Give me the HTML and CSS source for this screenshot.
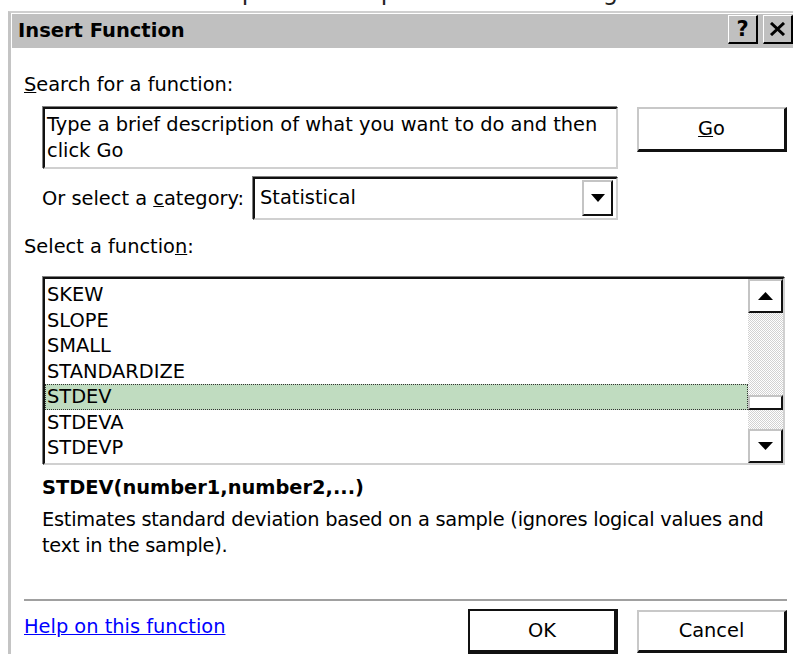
FILE: index.html
```html
<!DOCTYPE html>
<html lang="en">
<head>
<meta charset="utf-8">
<title>Insert Function</title>
<link rel="stylesheet" href="styles.css">
</head>
<body>
  <div class="doc-line"><p>Click the arrow to open the drop-down list of categories and then select the appropriate one.</p></div>

  <div class="window">
    <div class="frame">
      <div class="titlebar">
        <span class="title">Insert Function</span>
        <div class="caption-buttons">
          <span class="cap-btn">?</span>
          <span class="cap-btn">
            <svg width="17" height="14" viewBox="0 0 17 14" aria-hidden="true">
              <path d="M2 1 L15 13 M15 1 L2 13" stroke="#000" stroke-width="3" fill="none"/>
            </svg>
          </span>
        </div>
      </div>

      <div class="content">
        <div class="label"><u>S</u>earch for a function:</div>

        <div class="search-row">
          <div class="field search-box">Type a brief description of what you want to do and then click Go</div>
          <div class="button"><span><u>G</u>o</span></div>
        </div>

        <div class="category-row">
          <span class="cat-label">Or select a <u>c</u>ategory:</span>
          <div class="field combo">
            <span class="combo-value">Statistical</span>
            <span class="arrow-btn combo-btn">
              <svg width="14" height="8" viewBox="0 0 14 8" aria-hidden="true"><polygon points="0,0 14,0 7,8" fill="#000"/></svg>
            </span>
          </div>
        </div>

        <div class="label list-label">Select a functio<u>n</u>:</div>

        <div class="field listbox">
          <ul class="items">
            <li>SKEW</li>
            <li>SLOPE</li>
            <li>SMALL</li>
            <li>STANDARDIZE</li>
            <li class="selected">STDEV</li>
            <li>STDEVA</li>
            <li>STDEVP</li>
          </ul>
          <div class="scrollbar">
            <span class="arrow-btn scroll-btn">
              <svg width="15" height="8" viewBox="0 0 15 8" aria-hidden="true"><polygon points="0,8 15,8 7.5,0" fill="#000"/></svg>
            </span>
            <div class="track"><span class="thumb"></span></div>
            <span class="arrow-btn scroll-btn">
              <svg width="15" height="8" viewBox="0 0 15 8" aria-hidden="true"><polygon points="0,0 15,0 7.5,8" fill="#000"/></svg>
            </span>
          </div>
        </div>

        <div class="signature">STDEV(number1,number2,...)</div>
        <p class="description">Estimates standard deviation based on a sample (ignores logical values and text in the sample).</p>

        <div class="separator"></div>

        <div class="footer">
          <a class="help-link" href="#">Help on this function</a>
          <div class="footer-buttons">
            <div class="button default">OK</div>
            <div class="button">Cancel</div>
          </div>
        </div>
      </div>
    </div>
  </div>
</body>
</html>
```
FILE: styles.css
```css
* { box-sizing: border-box; }

html, body { margin: 0; padding: 0; }

body {
  width: 793px;
  height: 666px;
  overflow: hidden;
  background: #fff;
  color: #000;
  font-family: "DejaVu Sans", "Liberation Sans", sans-serif;
  font-size: 19.4px;
  line-height: 26px;
}

/* strip of the surrounding document, cut off by the dialog */
.doc-line {
  height: 11px;
  overflow: hidden;
}
.doc-line p {
  margin: -21px 0 0 8px;
  font-size: 24px;
  line-height: 26px;
  white-space: nowrap;
  color: #222;
}

/* window frame */
.window {
  margin-left: 8px;
  border-left: 3px solid #c4c4c4;
  border-top: 2px solid #cfcfcf;
}
.frame {
  border-left: 1px solid #fff;
  border-top: 1px solid #fff;
}

.titlebar {
  height: 34px;
  background: #c0c0c0;
  display: flex;
  align-items: center;
  justify-content: space-between;
  padding-left: 6px;
}
.title {
  font-weight: bold;
  font-size: 19.5px;
}
.caption-buttons {
  display: flex;
  gap: 5px;
  align-self: flex-start;
  margin-top: 1px;
}
.cap-btn {
  width: 30px;
  height: 29px;
  background: #c0c0c0;
  border-style: solid;
  border-width: 1px 2px 2px 1px;
  border-color: #fff #000 #000 #fff;
  display: flex;
  align-items: center;
  justify-content: center;
  font-weight: bold;
  font-size: 21px;
  line-height: 1;
}

/* dialog body */
.content {
  padding: 24px 6px 0 12px;
}
.label { height: 26px; }

.field {
  background: #fff;
  border: 2px solid;
  border-color: #111 #d0d0d0 #d0d0d0 #111;
  box-shadow: -1px -1px 0 #808080;
}

.button {
  width: 150px;
  height: 45px;
  background: #fff;
  border-style: solid;
  border-width: 2px 3px 3px 2px;
  border-color: #c8c8c8 #111 #111 #c8c8c8;
  display: flex;
  align-items: center;
  justify-content: center;
}
.button.default {
  border-width: 2px 4px 4px 2px;
  border-color: #111;
}
.footer-buttons .button:not(.default) { height: 43px; }

.search-row {
  display: flex;
  align-items: flex-start;
  gap: 19px;
  margin: 9px 0 0 19px;
}
.search-box {
  width: 575px;
  height: 62px;
  padding: 3px 2px 0;
}

.category-row {
  display: flex;
  align-items: center;
  margin: 8px 0 0 18px;
}
.cat-label {
  flex: none;
  width: 211px;
}
.combo {
  width: 365px;
  height: 43px;
  display: flex;
  align-items: center;
  justify-content: space-between;
  padding: 1px 3px 2px 5px;
}

.arrow-btn {
  display: flex;
  align-items: center;
  justify-content: center;
  background: #fff;
  border-style: solid;
  border-width: 2px;
  border-color: #c4c4c4 #111 #111 #c4c4c4;
}
.combo-btn {
  width: 31px;
  height: 36px;
}

.list-label { margin-top: 14px; }

.listbox {
  width: 742px;
  height: 188px;
  margin: 17px 0 0 19px;
  display: flex;
}
.items {
  flex: 1;
  list-style: none;
  margin: 0;
  padding: 3px 0 0;
}
.items li {
  height: 25.5px;
  line-height: 25.5px;
  padding-left: 2px;
}
.items li.selected {
  background: #c0dcc0;
  outline: 1px dotted #333;
  outline-offset: -1px;
}

.scrollbar {
  width: 35px;
  display: flex;
  flex-direction: column;
}
.scroll-btn {
  height: 34px;
  flex: none;
}
.track {
  flex: 1;
  background-color: #fff;
  background-image: repeating-conic-gradient(#d2d2d2 0 25%, #fff 0 50%);
  background-size: 2px 2px;
}
.thumb {
  display: block;
  height: 15px;
  margin-top: 82px;
  background: #fff;
  border-style: solid;
  border-width: 2px;
  border-color: #c4c4c4 #111 #111 #c4c4c4;
}

.signature {
  margin: 10px 0 0 18px;
  font-weight: bold;
}
.description {
  margin: 6px 0 0 18px;
  width: 745px;
  letter-spacing: -0.25px;
}

.separator {
  margin-top: 40px;
  height: 2px;
  background: #a0a0a0;
}

.footer {
  display: flex;
  justify-content: space-between;
  align-items: flex-start;
  margin-top: 8px;
}
.help-link {
  margin-top: 5px;
  color: #0000ff;
  text-decoration: underline;
}
.footer-buttons {
  display: flex;
  align-items: center;
  gap: 19px;
}
```
